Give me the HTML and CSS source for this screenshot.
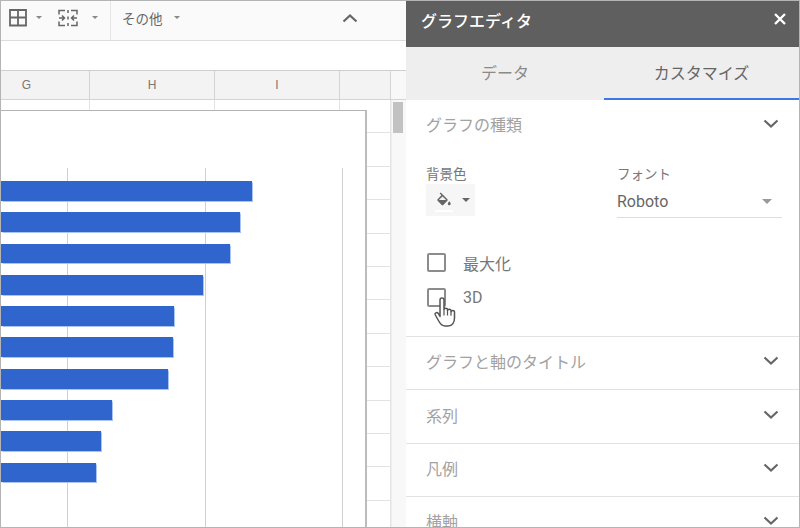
FILE: index.html
```html
<!DOCTYPE html>
<html lang="ja">
<head>
<meta charset="utf-8">
<title>グラフエディタ</title>
<link rel="stylesheet" href="styles.css">
</head>
<body>
<div class="app">
  <section class="sheet">
    <div class="toolbar">
      <div class="tool-group">
        <svg width="18" height="18" viewBox="0 0 18 18"><path d="M1 1h16v15.500H1zM9 1v15.500M1 8.500h16" fill="none" stroke="#666" stroke-width="1.800"/></svg>
        <span class="caret small-caret caret-a"></span>
        <svg class="icon-merge" width="20" height="18" viewBox="0 0 20 18"><path d="M1 5.500V1.500h6M13 1.500h6v4M1 12.500v4h6M13 16.500h6v-4M1 9h5M14 9h5M4 6.500L6.500 9 4 11.500M16 6.500L13.500 9l2.500 2.500M10 1v3M10 7.500v3M10 14v3" fill="none" stroke="#666" stroke-width="1.500"/></svg>
        <span class="caret small-caret caret-b"></span>
      </div>
      <div class="tool-more">
        <span class="more-label">その他</span>
        <span class="caret small-caret caret-c"></span>
        <svg class="collapse" width="16" height="10" viewBox="0 0 16 10"><path d="M1.500 8.500L8 2.500l6.500 6" fill="none" stroke="#666" stroke-width="2.200"/></svg>
      </div>
    </div>
    <div class="formula"></div>
    <div class="col-head">
      <div class="col-name col-g">G</div>
      <div class="col-name col-h">H</div>
      <div class="col-name col-i">I</div>
      <div class="col-name col-j"></div>
      <div class="col-corner"></div>
    </div>
    <div class="grid-body">
      <div class="cells">
        <div class="cell-col col-g"></div>
        <div class="cell-col col-h"></div>
        <div class="cell-col col-i"></div>
        <div class="cell-col col-j"></div>
      </div>
      <div class="scrollbar"><div class="thumb"></div></div>
      <div class="chart">
        <span class="gridline line-a"></span>
        <span class="gridline line-b"></span>
        <span class="gridline line-c"></span>
        <div class="bars">
          <div class="bar" style="width:251px"></div>
          <div class="bar" style="width:239px"></div>
          <div class="bar" style="width:229px"></div>
          <div class="bar" style="width:202px"></div>
          <div class="bar" style="width:173px"></div>
          <div class="bar" style="width:172px"></div>
          <div class="bar" style="width:167px"></div>
          <div class="bar" style="width:111px"></div>
          <div class="bar" style="width:100px"></div>
          <div class="bar" style="width:95px"></div>
        </div>
      </div>
    </div>
  </section>
  <aside class="panel">
    <header class="panel-head">
      <span class="panel-title">グラフエディタ</span>
      <svg width="14" height="14" viewBox="0 0 14 14"><path d="M2 2l10 10M12 2L2 12" stroke="#fff" stroke-width="2.400" fill="none"/></svg>
    </header>
    <nav class="tabs">
      <div class="tab">データ</div>
      <div class="tab active">カスタマイズ</div>
    </nav>
    <div class="section-head first">
      <span>グラフの種類</span>
      <svg class="chev" width="16" height="10" viewBox="0 0 16 10"><path d="M1.500 1.500L8 7.500l6.500-6" fill="none" stroke="#666" stroke-width="2.200"/></svg>
    </div>
    <div class="section-body">
      <div class="fields">
        <div class="field-color">
          <div class="field-label">背景色</div>
          <div class="color-btn">
            <svg width="18" height="24" viewBox="0 0 24 32"><g transform="translate(0 6)"><path d="M16.560 8.940L7.620 0 6.210 1.410l2.380 2.380-5.150 5.150c-.59.59-.59 1.540 0 2.120l5.500 5.500c.29.29.68.44 1.060.44s.77-.15 1.060-.44l5.500-5.500c.59-.58.59-1.530 0-2.120zM5.210 10L10 5.210 14.790 10H5.210zM19 11.500s-2 2.170-2 3.500c0 1.100.9 2 2 2s2-.9 2-2c0-1.330-2-3.500-2-3.500z" fill="#666"/></g><path d="M-2 30.500h30" stroke="#fff" stroke-width="2.500"/></svg>
            <span class="caret"></span>
          </div>
        </div>
        <div class="field-font">
          <div class="field-label">フォント</div>
          <div class="select">
            <span>Roboto</span>
            <span class="caret light-caret"></span>
          </div>
        </div>
      </div>
      <label class="check first-check"><span class="box"></span><span>最大化</span></label>
      <label class="check"><span class="box"></span><span>3D</span>
        <svg class="hand" width="24" height="31" viewBox="0 0 24 31"><path d="M7 3a2 2 0 0 1 4 0v9.500c0-1.800 3.500-1.800 3.500 0v1c0-1.600 3.500-1.600 3.500 0v1.200c0-1.500 3.500-1.500 3.500 0v6.300c0 4-2 8-6.500 8h-3c-3 0-4.500-1.800-6-4.500l-3.700-6.500c-1-2 1.500-3.300 2.800-1.800l1.900 3.300z" fill="#fff" stroke="#555" stroke-width="1.500" stroke-linejoin="round"/><path d="M11 12.500v6M14.500 13.500v5M18 14.700v4" stroke="#555" stroke-width="1.200" fill="none"/></svg>
      </label>
    </div>
    <div class="section-head">
      <span>グラフと軸のタイトル</span>
      <svg class="chev" width="16" height="10" viewBox="0 0 16 10"><path d="M1.500 1.500L8 7.500l6.500-6" fill="none" stroke="#666" stroke-width="2.200"/></svg>
    </div>
    <div class="section-head">
      <span>系列</span>
      <svg class="chev" width="16" height="10" viewBox="0 0 16 10"><path d="M1.500 1.500L8 7.500l6.500-6" fill="none" stroke="#666" stroke-width="2.200"/></svg>
    </div>
    <div class="section-head">
      <span>凡例</span>
      <svg class="chev" width="16" height="10" viewBox="0 0 16 10"><path d="M1.500 1.500L8 7.500l6.500-6" fill="none" stroke="#666" stroke-width="2.200"/></svg>
    </div>
    <div class="section-head">
      <span>横軸</span>
      <svg class="chev" width="16" height="10" viewBox="0 0 16 10"><path d="M1.500 1.500L8 7.500l6.500-6" fill="none" stroke="#666" stroke-width="2.200"/></svg>
    </div>
  </aside>
</div>
</body>
</html>
```

FILE: styles.css
```css
* { box-sizing: border-box; }
html, body { margin: 0; padding: 0; height: 100%; overflow: hidden; background: #fff; }
body { font-family: "Noto Sans CJK JP", "Noto Sans", Roboto, sans-serif; }

.app {
  position: relative;
  display: flex;
  width: 800px;
  height: 528px;
  overflow: hidden;
  border: 1px solid #b4b4b4;
}
.sheet { width: 405px; flex: none; display: flex; flex-direction: column; }

.toolbar {
  height: 40px;
  flex: none;
  display: flex;
  background: #fafafa;
  border-bottom: 1px solid #dcdcdc;
}
.tool-group {
  width: 110px;
  flex: none;
  display: flex;
  align-items: center;
  padding: 0 0 6px 8px;
  border-right: 1px solid #e6e6e6;
}
.icon-merge { margin-left: 16px; }
.caret {
  display: inline-block;
  width: 0;
  height: 0;
  border-left: 4px solid transparent;
  border-right: 4px solid transparent;
  border-top: 4px solid #666;
}
.small-caret { border-left-width: 3px; border-right-width: 3px; border-top: 3px solid #888; }
.caret-a { margin-left: 9px; }
.caret-b { margin-left: 14px; }
.caret-c { margin-left: 11px; }
.tool-more {
  flex: 1;
  display: flex;
  align-items: center;
  padding: 0 0 6px 11px;
}
.more-label { font-size: 13.500px; color: #666; }
.collapse { margin-left: 162px; }

.formula { height: 29px; flex: none; background: #fff; }

.col-head {
  height: 30px;
  flex: none;
  display: flex;
  background: #f3f3f3;
  border-top: 1px solid #cfcfcf;
  border-bottom: 1px solid #d4d4d4;
}
.col-name {
  flex: none;
  display: flex;
  align-items: center;
  justify-content: center;
  font-family: "Liberation Sans", Arial, sans-serif;
  font-size: 12px;
  color: #777;
  border-right: 1px solid #d4d4d4;
}
.col-g { width: 89px; }
.col-name.col-g { padding-right: 37px; }
.col-h { width: 125px; }
.col-i { width: 125px; }
.col-j { width: 51px; }
.col-corner { flex: 1; background: #f8f8f8; }

.grid-body { position: relative; flex: 1; display: flex; min-height: 0; }
.cells {
  flex: 1;
  display: flex;
  background: repeating-linear-gradient(to bottom, transparent 0, transparent 32.4px, #e2e2e2 32.4px, #e2e2e2 33.4px);
}
.cell-col { flex: none; border-right: 1px solid #e4e4e4; }
.scrollbar {
  width: 15px;
  flex: none;
  padding: 2px 2px 0 1px;
  background: #f8f8f8;
  border-left: 1px solid #eee;
}
.thumb { width: 10px; height: 31px; background: #c2c2c2; }

.chart {
  position: absolute;
  left: 0;
  top: 10px;
  width: 366px;
  height: 420px;
  background: #fff;
  border-top: 1px solid #b4b4b4;
  border-right: 2px solid #bcbcbc;
  padding-top: 70px;
}
.gridline { position: absolute; top: 57px; bottom: 0; width: 1px; background: #d0d0d0; }
.line-a { left: 66px; }
.line-b { left: 204px; }
.line-c { left: 341px; }
.bars {
  position: relative;
  display: flex;
  flex-direction: column;
  gap: 11.500px;
}
.bar {
  height: 19.800px;
  background: #2f65cc;
  box-shadow: 0 0 1px 0.500px #a9c4f0;
}

.panel {
  width: 393px;
  flex: none;
  background: #fff;
  overflow: hidden;
}
.panel-head {
  height: 46px;
  display: flex;
  align-items: center;
  justify-content: space-between;
  padding: 0 12px 0 15px;
  background: #5f5f5f;
  color: #fff;
}
.panel-title { font-size: 16px; font-weight: 500; padding-bottom: 8px; }
.panel-head svg { margin-bottom: 10px; }
.tabs { height: 53px; display: flex; background: #eeeeee; }
.tab {
  width: 198px;
  display: flex;
  align-items: center;
  justify-content: center;
  font-size: 16px;
  color: #8a8a8a;
  padding-bottom: 4px;
}
.tab.active { color: #666; flex: 1; border-bottom: 2px solid #3b78e7; padding-bottom: 2px; }

.section-head {
  height: 53.400px;
  display: flex;
  align-items: center;
  justify-content: space-between;
  padding: 0 20px 4px 20px;
  font-size: 16px;
  color: #a2a2a2;
  border-top: 1px solid #e2e2e2;
}
.section-head.first { border-top: 0; height: 50px; padding-bottom: 2px; }
.section-body { height: 186px; padding: 13px 20px 0; }
.fields { display: flex; }
.field-color { width: 191px; flex: none; }
.field-font { width: 165px; flex: none; }
.field-label { font-size: 13.500px; color: #777; line-height: 20px; height: 21px; }
.color-btn {
  width: 49px;
  height: 32px;
  display: flex;
  align-items: center;
  padding-left: 9px;
  gap: 9px;
  background: #f6f6f6;
}
.select {
  height: 34px;
  display: flex;
  align-items: center;
  justify-content: space-between;
  padding: 2px 10px 0 0;
  font-family: Roboto, sans-serif;
  font-size: 16px;
  color: #666;
  border-bottom: 1px solid #dedede;
}
.light-caret { border-top-color: #999; border-left-width: 5px; border-right-width: 5px; border-top-width: 5px; }
.check {
  position: relative;
  display: flex;
  align-items: center;
  gap: 17px;
  height: 35px;
  font-family: Roboto, "Noto Sans CJK JP", sans-serif;
  font-size: 16px;
  color: #777;
}
.first-check { margin-top: 27px; }
.box {
  width: 19px;
  height: 19px;
  margin-left: 1px;
  border: 2px solid #8c8c8c;
  border-radius: 2px;
  background: #fff;
}
.hand { position: absolute; left: 7px; top: 17px; }
```
